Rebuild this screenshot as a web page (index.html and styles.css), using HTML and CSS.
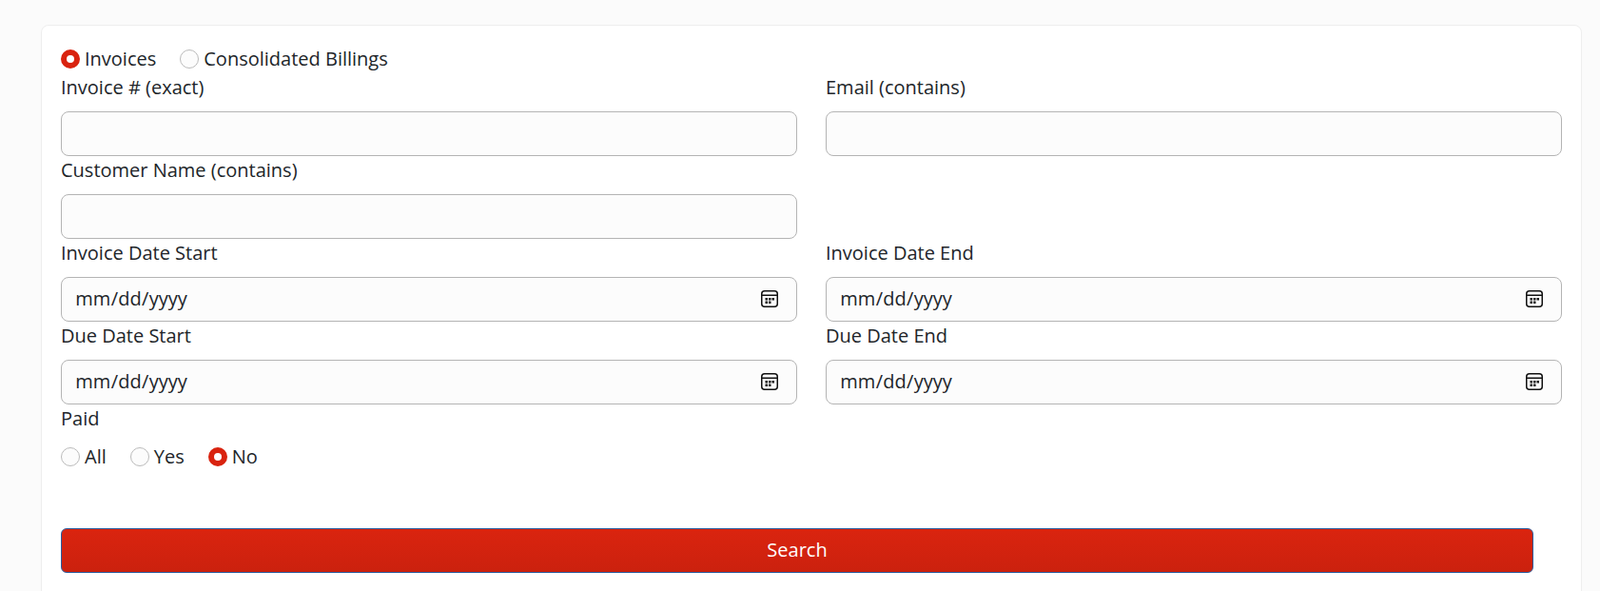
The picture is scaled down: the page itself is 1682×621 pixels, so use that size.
FILE: index.html
```html
<!DOCTYPE html>
<html lang="en">
<head>
    <meta charset="UTF-8">
    <meta name="viewport" content="width=device-width, initial-scale=1.0">
    <title>Invoices</title>
    <link rel="stylesheet" href="styles.css">
</head>
<body>

    <form class="search-card">
        <div class="radio-row radio-row-top">
            <label class="radio-item"><input type="radio" name="kind" checked>Invoices</label>
            <label class="radio-item"><input type="radio" name="kind">Consolidated Billings</label>
        </div>

        <div class="field-grid">
            <div class="field">
                <label for="invoice">Invoice # (exact)</label>
                <input type="text" id="invoice">
            </div>
            <div class="field">
                <label for="email">Email (contains)</label>
                <input type="text" id="email">
            </div>
            <div class="field">
                <label for="customer">Customer Name (contains)</label>
                <input type="text" id="customer">
            </div>
            <div class="field"></div>
            <div class="field">
                <label for="invoice-start">Invoice Date Start</label>
                <input type="date" id="invoice-start">
            </div>
            <div class="field">
                <label for="invoice-end">Invoice Date End</label>
                <input type="date" id="invoice-end">
            </div>
            <div class="field">
                <label for="due-start">Due Date Start</label>
                <input type="date" id="due-start">
            </div>
            <div class="field">
                <label for="due-end">Due Date End</label>
                <input type="date" id="due-end">
            </div>
        </div>

        <div class="paid-label">Paid</div>
        <div class="radio-row">
            <label class="radio-item"><input type="radio" name="paid">All</label>
            <label class="radio-item"><input type="radio" name="paid">Yes</label>
            <label class="radio-item"><input type="radio" name="paid" checked>No</label>
        </div>

        <button type="button" class="btn-search">Search</button>
    </form>

</body>
</html>
```

FILE: styles.css
```css
html, body {
    height: 100%;
    overflow: hidden;
}
body {
    margin: 0;
    padding: 26px 19px 0 43px;
    background: #fbfbfb;
    color: #212529;
    font-family: "Open Sans", sans-serif;
    font-size: 20px;
    line-height: 30px;
}
.search-card {
    min-height: 700px;
    padding: 20px;
    background: #fff;
    border: 1px solid #eee;
    border-radius: 8px;
}
.radio-row {
    display: flex;
    gap: 25px;
    height: 32px;
    align-items: center;
}
.radio-row-top {
    height: 30px;
}
.radio-item {
    display: flex;
    align-items: center;
    gap: 5px;
}
.radio-item input {
    appearance: none;
    width: 20px;
    height: 20px;
    margin: 0;
    background: #fcfcfc;
    border: 1px solid #bbb;
    border-radius: 50%;
}
.radio-item input:checked {
    background: #fff;
    border: 6.5px solid #d9230f;
}
.field-grid {
    display: grid;
    grid-template-columns: 774px 774px;
    column-gap: 30px;
}
.field {
    height: 87px;
}
.field label {
    display: block;
    height: 40px;
}
.field input {
    display: block;
    box-sizing: border-box;
    width: 100%;
    height: 47px;
    padding: 0 19px 2px 14px;
    background: #fcfcfc;
    color: #212529;
    font-family: inherit;
    font-size: 20px;
    border: 1px solid #b4b4b4;
    border-radius: 8px;
}
.field input::-webkit-datetime-edit-month-field,
.field input::-webkit-datetime-edit-day-field,
.field input::-webkit-datetime-edit-year-field {
    padding: 0.3px;
}
.field input::-webkit-calendar-picker-indicator {
    width: 18px;
    height: 18px;
    margin: 0;
    padding: 0;
    background: url("data:image/svg+xml,%3Csvg xmlns='http://www.w3.org/2000/svg' viewBox='0 0 18 18'%3E%3Crect x='.75' y='.75' width='16.5' height='16.5' rx='3' fill='none' stroke='%23111' stroke-width='1.5'/%3E%3Cpath d='M1 5.25h16' stroke='%23111' stroke-width='1.5'/%3E%3Cpath d='M4.5 8h2.5v2.5H4.5zM8 8h2.5v2.5H8zM11.5 8H14v2.5h-2.5zM4.5 11.5H7V14H4.5zM8 11.5h2.5V14H8z' fill='%23111'/%3E%3C/svg%3E") no-repeat center / 18px 18px;
}
.paid-label {
    height: 39px;
}
.btn-search {
    display: block;
    width: 1548px;
    height: 47px;
    margin-top: 59px;
    padding-bottom: 3px;
    background: linear-gradient(#da240f, #cb210e);
    color: #fff;
    font-family: inherit;
    font-size: 20px;
    border: 1px solid #2a5d9f;
    border-radius: 6px;
}
```
